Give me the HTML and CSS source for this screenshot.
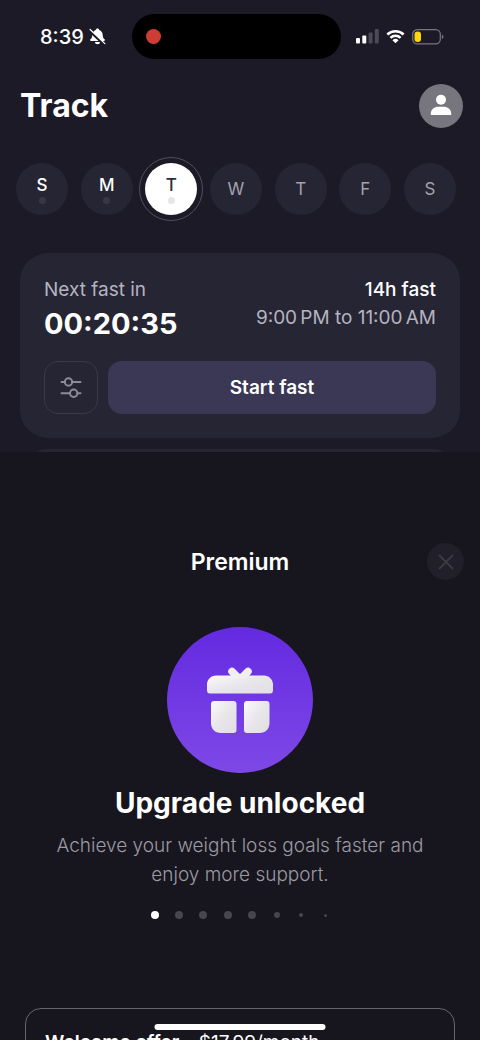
FILE: index.html
```html
<!DOCTYPE html>
<html lang="en">
<head>
<meta charset="utf-8">
<meta name="viewport" content="width=device-width, initial-scale=1">
<title>Track</title>
<link rel="stylesheet" href="styles.css">
</head>
<body>
<div class="screen">
  <div class="status">
    <div class="status-left">
      <span class="clock">8:39</span>
      <svg class="bell" viewBox="0 0 18 18" aria-hidden="true">
        <path d="M9 .6c1 0 1.700.6 1.800 1.500 2.400.8 3.600 2.800 3.700 5.200.1 2.600.8 3.600 2 4.700.7.7.4 1.800-.7 1.800H2.200c-1.100 0-1.400-1.100-.7-1.800 1.200-1.100 1.900-2.100 2-4.700.1-2.400 1.300-4.400 3.700-5.200C7.300 1.200 8 .6 9 .6zM6.300 14.900h5.400c-.2 1.500-1.200 2.400-2.700 2.400s-2.500-.9-2.700-2.400z" fill="#fff"/>
        <path d="M.4 2.800l15.500 14.600" stroke="#1b1a26" stroke-width="2.800"/>
        <path d="M1.200 1.600l15.600 15" stroke="#fff" stroke-width="1.300" stroke-linecap="round"/>
      </svg>
    </div>
    <div class="island"><span class="record"></span></div>
    <div class="status-right">
      <svg class="signal" viewBox="0 0 23 15" aria-hidden="true">
        <rect x="0" y="9" width="4" height="5.500" rx="1" fill="#fff"/>
        <rect x="6.300" y="6.500" width="4" height="8" rx="1" fill="#fff"/>
        <rect x="12.600" y="3.500" width="4" height="11" rx="1" fill="#4b4a56"/>
        <rect x="18.800" y="0" width="4" height="14.500" rx="1" fill="#4b4a56"/>
      </svg>
      <svg class="wifi" viewBox="0 0 20 15" aria-hidden="true">
        <g fill="none" stroke="#fff" stroke-width="2.700">
          <path d="M1.400 5.400a12.300 12.300 0 0 1 17.200 0"/>
          <path d="M4.700 8.900a7.600 7.600 0 0 1 10.600 0"/>
        </g>
        <path d="M10 14.700l-3.200-3.300a4.600 4.600 0 0 1 6.400 0z" fill="#fff"/>
      </svg>
      <svg class="battery" viewBox="0 0 32 16" aria-hidden="true">
        <rect x=".7" y=".7" width="27.600" height="14.200" rx="4.600" fill="none" stroke="#777681" stroke-width="1.200"/>
        <rect x="2.500" y="2.500" width="6.500" height="10.600" rx="3" fill="#ffd60a"/>
        <path d="M29.900 5.500v4.600c1-.4 1.500-1.300 1.500-2.300s-.5-1.900-1.500-2.300z" fill="#777681"/>
      </svg>
    </div>
  </div>

  <header class="header">
    <h1 class="title">Track</h1>
    <button class="avatar" type="button" aria-label="Profile">
      <svg viewBox="0 0 44 44" aria-hidden="true">
        <circle cx="22" cy="15.800" r="5" fill="#fff"/>
        <path d="M11.800 30.900v-1.400c0-4.300 4-6.700 7.200-6.700h6c3.200 0 7.200 2.400 7.200 6.700v1.400z" fill="#fff"/>
      </svg>
    </button>
  </header>

  <nav class="days" aria-label="Days of the week">
    <button class="day past" type="button"><span>S</span><i class="dot"></i></button>
    <button class="day past" type="button"><span>M</span><i class="dot"></i></button>
    <button class="day today" type="button"><span>T</span><i class="dot"></i></button>
    <button class="day" type="button">W</button>
    <button class="day" type="button">T</button>
    <button class="day" type="button">F</button>
    <button class="day" type="button">S</button>
  </nav>

  <section class="card">
    <div class="card-row">
      <div class="countdown">
        <span class="muted">Next fast in</span>
        <strong class="timer">00:20:35</strong>
      </div>
      <div class="plan">
        <span class="plan-name">14h fast</span>
        <span class="muted">9:00&#8198;PM to 11:00&#8198;AM</span>
      </div>
    </div>
    <div class="actions">
      <button class="settings" type="button" aria-label="Fast settings">
        <svg viewBox="0 0 22 22" aria-hidden="true">
          <g fill="none" stroke="#8d8b98" stroke-width="2">
            <path d="M1.500 5h3.500M12 5h8.500M1.500 16.200h8.500M17.500 16.200h3" stroke-linecap="round"/>
            <circle cx="8.500" cy="5" r="3.700"/>
            <circle cx="13.700" cy="16.200" r="3.700"/>
          </g>
        </svg>
      </button>
      <button class="start" type="button">Start fast</button>
    </div>
  </section>
  <div class="peek"><div class="peek-card"></div></div>

  <main class="sheet">
    <div class="sheet-bar">
      <h2 class="sheet-title">Premium</h2>
      <button class="close" type="button" aria-label="Close">
        <svg viewBox="0 0 16 16" aria-hidden="true"><path d="M1.500 1.500l13 13M14.500 1.500l-13 13" stroke="#3b3a43" stroke-width="2" stroke-linecap="round"/></svg>
      </button>
    </div>
    <svg class="gift" viewBox="0 0 146 146" role="img" aria-label="Gift">
      <defs>
        <linearGradient id="violet" x1="0" y1="0" x2="0" y2="1"><stop offset="0" stop-color="#642ae0"/><stop offset="1" stop-color="#7e48e7"/></linearGradient>
        <linearGradient id="silver" x1="0" y1="0" x2="1" y2="1"><stop offset="0" stop-color="#fafafa"/><stop offset=".5" stop-color="#e9e6eb"/><stop offset="1" stop-color="#e0dde3"/></linearGradient>
      </defs>
      <circle cx="73" cy="73" r="73" fill="url(#violet)"/>
      <path d="M65 44.500l8 8 8-8" fill="none" stroke="#f1eff2" stroke-width="7.500" stroke-linecap="round" stroke-linejoin="round"/>
      <path d="M49 48.500h48c5 0 9 4 9 9v6a3 3 0 0 1-3 3H43a3 3 0 0 1-3-3v-6c0-5 4-9 9-9z" fill="url(#silver)"/>
      <path d="M47 74h19.500a3 3 0 0 1 3 3v26a3 3 0 0 1-3 3H54c-6 0-10-4-10-10V77a3 3 0 0 1 3-3z" fill="url(#silver)"/>
      <path d="M80 74h19.500a3 3 0 0 1 3 3v19c0 6-4 10-10 10H80a3 3 0 0 1-3-3V77a3 3 0 0 1 3-3z" fill="url(#silver)"/>
    </svg>
    <h3 class="headline">Upgrade unlocked</h3>
    <p class="copy">Achieve your weight loss goals faster and enjoy more support.</p>
    <div class="pager" aria-hidden="true">
      <span class="page"><i class="pip active"></i></span>
      <span class="page"><i class="pip"></i></span>
      <span class="page"><i class="pip"></i></span>
      <span class="page"><i class="pip"></i></span>
      <span class="page"><i class="pip"></i></span>
      <span class="page"><i class="pip medium"></i></span>
      <span class="page"><i class="pip small"></i></span>
      <span class="page"><i class="pip tiny"></i></span>
    </div>
    <div class="offer"><strong>Welcome offer</strong><span>–</span><span>$17.99/month</span></div>
  </main>
  <div class="home-bar"></div>
</div>
</body>
</html>
```
FILE: styles.css
```css
* { box-sizing: border-box; }
body {
  margin: 0;
  background: #1b1a26;
  color: #fff;
  font-family: Inter, "Liberation Sans", sans-serif;
}
button {
  border: 0;
  padding: 0;
  color: inherit;
  font: inherit;
  cursor: pointer;
}
h1, h2, h3, p { margin: 0; }
svg { display: block; }

.screen {
  position: relative;
  display: flex;
  flex-direction: column;
  height: 100vh;
  overflow: hidden;
}
.screen > * { flex-shrink: 0; }

.status {
  display: grid;
  grid-template-columns: 92fr 209px 103fr;
  align-items: center;
  padding: 14px 36px 0 40px;
}
.status-left, .status-right { display: flex; align-items: center; }
.status-left { gap: 5px; }
.status-right { justify-content: flex-end; gap: 7px; }
.clock { font-size: 20px; line-height: 24px; font-weight: 500; }
.bell { width: 17px; height: 17px; }
.signal { width: 23px; height: 15px; }
.wifi { width: 19px; height: 15px; }
.battery { width: 32px; height: 16px; }
.island {
  display: flex;
  align-items: center;
  height: 45px;
  padding-left: 14px;
  border-radius: 24px;
  background: #000;
}
.record { width: 15px; height: 15px; border-radius: 50%; background: #cd3d33; }

.header {
  display: flex;
  align-items: center;
  justify-content: space-between;
  padding: 25px 17px 0 20px;
}
.title { font-size: 32px; line-height: 44px; font-weight: 700; }
.avatar { width: 44px; height: 44px; border-radius: 50%; background: #77767e; }

.days {
  display: flex;
  justify-content: space-between;
  padding: 35px 24px 0 16px;
}
.day {
  display: flex;
  flex-direction: column;
  align-items: center;
  justify-content: center;
  gap: 2px;
  width: 52px;
  height: 52px;
  border-radius: 50%;
  background: #262534;
  color: #a3a1ae;
  font-size: 17px;
  line-height: 20px;
}
.past { color: #fff; font-weight: 500; }
.dot { width: 7px; height: 7px; border-radius: 50%; background: #383744; }
.today {
  background: #fff;
  color: #2d2c39;
  font-weight: 500;
  outline: 1px solid #504f5a;
  outline-offset: 5px;
}
.today .dot { background: #e7e5e9; }

.card {
  margin: 38px 20px 0;
  padding: 25px 24px 24px;
  border-radius: 28px;
  background: #262534;
}
.card-row { display: flex; justify-content: space-between; }
.countdown, .plan { display: flex; flex-direction: column; font-size: 19px; line-height: 24px; }
.plan { align-items: flex-end; gap: 4px; }
.muted { color: #b5b3c0; }
.plan-name { font-weight: 500; }
.timer { font-size: 29px; line-height: 44px; font-weight: 700; }
.actions { display: flex; gap: 10px; padding-top: 15px; }
.settings {
  display: grid;
  place-items: center;
  width: 54px;
  height: 53px;
  border: 1px solid #3a3947;
  border-radius: 14px;
  background: transparent;
}
.settings svg { width: 22px; height: 22px; }
.start {
  flex: 1;
  height: 53px;
  border-radius: 14px;
  background: #3a3855;
  font-size: 19px;
  font-weight: 600;
}
.peek { height: 14px; padding: 11px 20px 0; overflow: hidden; }
.peek-card { height: 60px; border-radius: 28px; background: #262534; }

.sheet {
  display: flex;
  flex-direction: column;
  align-items: center;
  padding: 91px 16px 0;
  background: #17151e;
}
.sheet-bar {
  display: grid;
  grid-template-columns: 1fr auto 1fr;
  align-items: center;
  align-self: stretch;
}
.sheet-title { grid-column: 2; font-size: 23px; line-height: 36px; font-weight: 600; }
.close {
  display: grid;
  place-items: center;
  justify-self: end;
  width: 37px;
  height: 37px;
  border-radius: 50%;
  background: #211f29;
}
.close svg { width: 16px; height: 16px; }
.gift { width: 146px; height: 146px; margin-top: 47px; }
.headline { margin-top: 12px; font-size: 28px; line-height: 36px; font-weight: 700; }
.copy {
  max-width: 390px;
  margin-top: 10px;
  color: #9c9aa3;
  font-size: 19px;
  font-weight: 300;
  line-height: 29px;
  text-align: center;
}
.pager { display: flex; justify-content: space-between; width: 179px; margin-top: 22px; }
.page { display: grid; place-items: center; width: 8px; height: 8px; }
.pip { width: 8px; height: 8px; border-radius: 50%; background: #47454f; }
.active { background: #fff; }
.medium { width: 6px; height: 6px; }
.small { width: 4px; height: 4px; }
.tiny { width: 3px; height: 3px; }
.offer {
  display: flex;
  gap: 5px;
  align-self: stretch;
  height: 90px;
  margin: 89px 9px 0;
  padding: 22px 19px;
  border: 1px solid #66646e;
  border-radius: 16px;
  font-size: 19px;
  line-height: 24px;
}
.offer strong { font-weight: 600; }
.home-bar {
  position: absolute;
  bottom: 10px;
  left: 50%;
  width: 171px;
  height: 6px;
  border-radius: 3px;
  background: #fff;
  transform: translateX(-50%);
}
```
